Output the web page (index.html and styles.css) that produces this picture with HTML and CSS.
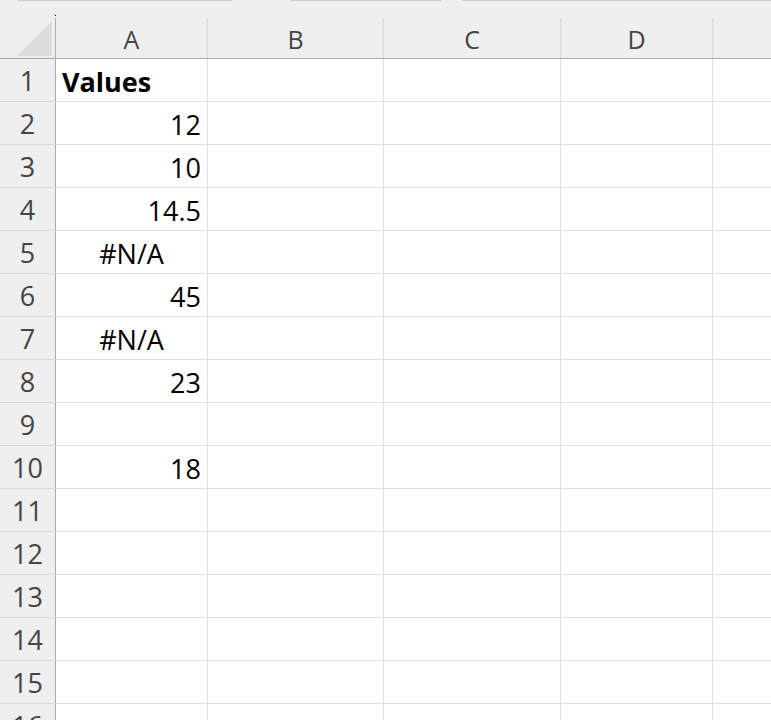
FILE: index.html
```html
<!DOCTYPE html>
<html lang="en">
<head>
    <meta charset="UTF-8">
    <meta name="viewport" content="width=device-width, initial-scale=1.0">
    <title>Sheet1</title>
    <link rel="stylesheet" href="styles.css">
</head>
<body>
    <div class="tabs">
        <span class="tab tab-1"></span>
        <span class="tab tab-2"></span>
        <span class="tab tab-3"></span>
    </div>

    <div class="head">
        <div class="corner"><div class="tri"></div></div>
        <div class="col-h w-a">A</div>
        <div class="col-h w-b">B</div>
        <div class="col-h w-c">C</div>
        <div class="col-h w-d">D</div>
        <div class="col-h w-e"></div>
    </div>

    <div class="rows">
        <div class="row"><div class="rh">1</div><div class="cell w-a text bold">Values</div><div class="cell w-b"></div><div class="cell w-c"></div><div class="cell w-d"></div><div class="cell w-e"></div></div>
        <div class="row"><div class="rh">2</div><div class="cell w-a num">12</div><div class="cell w-b"></div><div class="cell w-c"></div><div class="cell w-d"></div><div class="cell w-e"></div></div>
        <div class="row"><div class="rh">3</div><div class="cell w-a num">10</div><div class="cell w-b"></div><div class="cell w-c"></div><div class="cell w-d"></div><div class="cell w-e"></div></div>
        <div class="row"><div class="rh">4</div><div class="cell w-a num">14.5</div><div class="cell w-b"></div><div class="cell w-c"></div><div class="cell w-d"></div><div class="cell w-e"></div></div>
        <div class="row"><div class="rh">5</div><div class="cell w-a err">#N/A</div><div class="cell w-b"></div><div class="cell w-c"></div><div class="cell w-d"></div><div class="cell w-e"></div></div>
        <div class="row"><div class="rh">6</div><div class="cell w-a num">45</div><div class="cell w-b"></div><div class="cell w-c"></div><div class="cell w-d"></div><div class="cell w-e"></div></div>
        <div class="row"><div class="rh">7</div><div class="cell w-a err">#N/A</div><div class="cell w-b"></div><div class="cell w-c"></div><div class="cell w-d"></div><div class="cell w-e"></div></div>
        <div class="row"><div class="rh">8</div><div class="cell w-a num">23</div><div class="cell w-b"></div><div class="cell w-c"></div><div class="cell w-d"></div><div class="cell w-e"></div></div>
        <div class="row"><div class="rh">9</div><div class="cell w-a"></div><div class="cell w-b"></div><div class="cell w-c"></div><div class="cell w-d"></div><div class="cell w-e"></div></div>
        <div class="row"><div class="rh">10</div><div class="cell w-a num">18</div><div class="cell w-b"></div><div class="cell w-c"></div><div class="cell w-d"></div><div class="cell w-e"></div></div>
        <div class="row"><div class="rh">11</div><div class="cell w-a"></div><div class="cell w-b"></div><div class="cell w-c"></div><div class="cell w-d"></div><div class="cell w-e"></div></div>
        <div class="row"><div class="rh">12</div><div class="cell w-a"></div><div class="cell w-b"></div><div class="cell w-c"></div><div class="cell w-d"></div><div class="cell w-e"></div></div>
        <div class="row"><div class="rh">13</div><div class="cell w-a"></div><div class="cell w-b"></div><div class="cell w-c"></div><div class="cell w-d"></div><div class="cell w-e"></div></div>
        <div class="row"><div class="rh">14</div><div class="cell w-a"></div><div class="cell w-b"></div><div class="cell w-c"></div><div class="cell w-d"></div><div class="cell w-e"></div></div>
        <div class="row"><div class="rh">15</div><div class="cell w-a"></div><div class="cell w-b"></div><div class="cell w-c"></div><div class="cell w-d"></div><div class="cell w-e"></div></div>
        <div class="row"><div class="rh">16</div><div class="cell w-a"></div><div class="cell w-b"></div><div class="cell w-c"></div><div class="cell w-d"></div><div class="cell w-e"></div></div>
    </div>
</body>
</html>
```

FILE: styles.css
```css
body {
    margin: 0;
    height: 720px;
    overflow: hidden;
    background: white;
    font-family: 'Open Sans', 'Noto Sans', sans-serif;
}
.tabs {
    display: flex;
    height: 1px;
    background: #efefef;
}
.tab {
    height: 1px;
    background: #cfcfcf;
}
.tab-1 {
    margin-left: 17px;
    width: 215px;
}
.tab-2 {
    margin-left: 59px;
    width: 150px;
}
.tab-3 {
    margin-left: 21px;
    flex: 1;
}
.head {
    display: flex;
    height: 57px;
    background: #efefef;
    border-bottom: 1px solid #ababab;
}
.corner {
    position: relative;
    width: 56px;
    height: 40px;
    align-self: flex-end;
    border-right: 1px solid #ababab;
    display: flex;
    justify-content: flex-end;
    align-items: flex-end;
    padding-right: 3px;
    padding-bottom: 2px;
    box-sizing: border-box;
}
.corner::before {
    content: '';
    position: absolute;
    right: -1px;
    top: -3px;
    width: 1px;
    height: 1px;
    background: #000;
}
.tri {
    width: 35px;
    height: 35px;
    background: #dcdcdc;
    clip-path: polygon(100% 0, 100% 100%, 0 100%);
}
.col-h {
    align-self: flex-end;
    height: 40px;
    line-height: 42px;
    text-align: center;
    font-size: 25px;
    color: #444;
    border-right: 1px solid #d9d9d9;
    box-sizing: border-box;
}
.w-a { width: 152px; }
.w-b { width: 176px; }
.w-c { width: 177px; }
.w-d { width: 152px; }
.w-e { flex: 1; border-right: none; }
.row {
    display: flex;
    height: 43px;
}
.rh {
    width: 56px;
    box-sizing: border-box;
    background: #efefef;
    border-right: 1px solid #ababab;
    border-bottom: 1px solid #d9d9d9;
    color: #444;
    font-size: 27px;
    line-height: 44px;
    text-align: center;
}
.cell {
    box-sizing: border-box;
    border-right: 1px solid #e1e1e1;
    border-bottom: 1px solid #e1e1e1;
    font-size: 27px;
    line-height: 46px;
    color: #000;
    padding: 0 6px;
    white-space: nowrap;
    overflow: hidden;
}
.cell.w-e {
    border-right: none;
}
.num {
    text-align: right;
}
.err {
    text-align: center;
}
.bold {
    font-weight: 700;
}
```
